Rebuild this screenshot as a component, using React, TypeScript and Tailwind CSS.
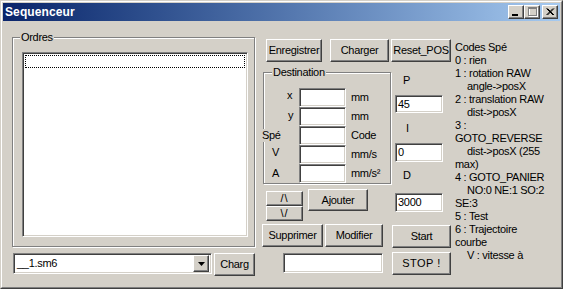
import React from 'react';

/* ── Win2000 bevels ───────────────────────────────────── */
const raised =
  'bg-[#d4d0c8] border border-t-white border-l-white border-r-[#404040] border-b-[#404040] shadow-[inset_-1px_-1px_0_#808080]';
const sunken =
  'bg-white border border-t-[#808080] border-l-[#808080] border-r-white border-b-white shadow-[inset_1px_1px_0_#404040,inset_-1px_-1px_0_#d4d0c8]';
const etched = 'border border-[#808080] shadow-[inset_1px_1px_0_#fff,1px_1px_0_#fff]';

function Btn({ className, children }: { className: string; children: React.ReactNode }) {
  return (
    <div className={`${raised} ${className} flex shrink-0 items-center justify-center text-black`}>
      {children}
    </div>
  );
}

function Edit({ className, value = '' }: { className: string; value?: string }) {
  return (
    <div className={`${sunken} ${className} shrink-0 pl-[2px] pt-[2px] text-black`}>{value}</div>
  );
}

/* ── Title bar ────────────────────────────────────────── */
function CaptionButton({ children }: { children: React.ReactNode }) {
  return (
    <div className={`${raised} h-[14px] w-[16px]`}>
      <svg width="14" height="12" viewBox="0 0 14 12">
        {children}
      </svg>
    </div>
  );
}

function TitleBar() {
  return (
    <div className="flex h-[18px] shrink-0 items-center bg-gradient-to-r from-[#0a246a] to-[#a6caf0] pl-[2px] pr-[2px]">
      <span className="text-[12px] font-bold tracking-[0.1px] text-white">Sequenceur</span>
      <div className="ml-auto flex items-center">
        <CaptionButton>
          <rect x="3" y="8" width="6" height="2" fill="#000" />
        </CaptionButton>
        <CaptionButton>
          <rect x="3.5" y="1.5" width="8" height="8" fill="none" stroke="#fff" transform="translate(1 1)" />
          <rect x="3.5" y="1.5" width="8" height="8" fill="none" stroke="#808080" />
          <rect x="3" y="2" width="9" height="1" fill="#808080" />
        </CaptionButton>
        <div className="ml-[2px]">
          <CaptionButton>
            <path d="M3.5 2.5 L10 9 M4.5 2.5 L11 9 M10 2.5 L3.5 9 M11 2.5 L4.5 9" stroke="#000" strokeWidth="1" />
          </CaptionButton>
        </div>
      </div>
    </div>
  );
}

/* ── Data ─────────────────────────────────────────────── */
const destRows = [
  { label: 'x', pad: 'w-[35px] pl-[23px] -mt-[4px]', unit: 'mm' },
  { label: 'y', pad: 'w-[35px] pl-[24px] -mt-[3px]', unit: 'mm' },
  { label: 'Spé', pad: 'w-[37px] -ml-[2px] bg-[#d4d0c8]', unit: 'Code' },
  { label: 'V', pad: 'w-[35px] pl-[8px] -mt-[4px]', unit: 'mm/s' },
  { label: 'A', pad: 'w-[35px] pl-[8px]', unit: 'mm/s²' },
];

const codes: [string, boolean][] = [
  ['Codes Spé', false],
  ['0 : rien', false],
  ['1 : rotation RAW', false],
  ['angle->posX', true],
  ['2 : translation RAW', false],
  ['dist->posX', true],
  ['3 :', false],
  ['GOTO_REVERSE', false],
  ['dist->posX (255', true],
  ['max)', false],
  ['4 : GOTO_PANIER', false],
  ['NO:0 NE:1 SO:2', true],
  ['SE:3', false],
  ['5 : Test', false],
  ['6 : Trajectoire', false],
  ['courbe', false],
  ['V : vitesse à', true],
];

/* ── Page ─────────────────────────────────────────────── */
export default function App() {
  return (
    <div className="h-[289px] w-[563px] border border-t-[#d4d0c8] border-l-[#d4d0c8] border-r-[#404040] border-b-[#404040] bg-[#d4d0c8] font-['Liberation_Sans',Arial,sans-serif] text-[11px] leading-[13px] tracking-[-0.3px] text-black">
      <div className="flex h-full flex-col border border-t-white border-l-white border-r-[#808080] border-b-[#808080] p-px">
        <TitleBar />

        <div className="flex flex-1 items-start">
          {/* ── Left: Ordres + file ── */}
          <div className="ml-[9px] flex w-[243px] shrink-0 flex-col">
            <div className={`${etched} relative mt-[16px] h-[210px] w-[243px]`}>
              <span className="absolute -top-[7px] left-[7px] bg-[#d4d0c8] px-px">Ordres</span>
              <div className={`${sunken} ml-[9px] mt-[14px] h-[185px] w-[226px] p-[2px]`}>
                <div className="h-[13px] w-full border border-dotted border-black" />
              </div>
            </div>
            <div className="mt-[6px] flex items-start">
              <div className={`${sunken} ml-px flex h-[21px] w-[205px] items-center p-[2px]`}>
                <span className="flex-1 pl-px">__1.sm6</span>
                <div className={`${raised} flex h-[17px] w-[16px] items-center justify-center`}>
                  <svg width="7" height="4" viewBox="0 0 7 4">
                    <path d="M0 0 H7 L3.5 4 Z" fill="#000" />
                  </svg>
                </div>
              </div>
              <Btn className="ml-[2px] h-[23px] w-[41px]">Charg</Btn>
            </div>
          </div>

          {/* ── Middle: controls ── */}
          <div className="ml-[7px] mt-[18px] flex w-[189px] shrink-0 flex-col">
            <div className="flex items-start">
              <Btn className="ml-[4px] h-[23px] w-[56px]">Enregistrer</Btn>
              <Btn className="ml-[8px] h-[23px] w-[59px]">Charger</Btn>
              <Btn className="ml-[2px] h-[23px] w-[60px]">Reset_POS</Btn>
            </div>

            <div className="flex items-start">
              <div className="flex w-[130px] flex-col">
                <div className={`${etched} relative ml-px mt-[10px] h-[112px] w-[128px] pt-[15px]`}>
                  <span className="absolute -top-[7px] left-[8px] bg-[#d4d0c8] px-px">Destination</span>
                  {destRows.map(r => (
                    <div key={r.label} className="flex h-[19px] items-center">
                      <span className={`shrink-0 ${r.pad}`}>{r.label}</span>
                      <Edit className="h-[19px] w-[47px]" />
                      <span className="ml-[5px]">{r.unit}</span>
                    </div>
                  ))}
                </div>
                <div className="mt-[5px] flex items-start">
                  <div className="ml-[4px] mt-[2px] flex flex-col">
                    <Btn className="h-[15px] w-[37px] tracking-[1px]">/\</Btn>
                    <Btn className="h-[15px] w-[37px] tracking-[1px]">\/</Btn>
                  </div>
                  <Btn className="ml-[5px] h-[22px] w-[60px]">Ajouter</Btn>
                </div>
              </div>

              <div className="flex w-[59px] flex-col">
                <span className="ml-[11px] mt-[12px]">P</span>
                <Edit className="ml-[3px] mt-[8px] h-[18px] w-[48px]" value="45" />
                <span className="ml-[14px] mt-[9px]">I</span>
                <Edit className="ml-[3px] mt-[8px] h-[19px] w-[48px]" value="0" />
                <span className="ml-[11px] mt-[7px]">D</span>
                <Edit className="ml-[3px] mt-[11px] h-[19px] w-[48px]" value="3000" />
              </div>
            </div>

            <div className="mt-[3px] flex items-start">
              <Btn className="h-[23px] w-[61px]">Supprimer</Btn>
              <Btn className="ml-[2px] h-[23px] w-[58px]">Modifier</Btn>
              <Btn className="ml-[9px] mt-px h-[23px] w-[59px]">Start</Btn>
            </div>

            <div className="mt-[4px] flex items-start">
              <Edit className="ml-[21px] mt-px h-[20px] w-[100px]" />
              <Btn className="ml-[9px] h-[23px] w-[59px] tracking-[0.5px]">STOP !</Btn>
            </div>
          </div>

          {/* ── Right: codes help ── */}
          <div className="ml-[4px] mt-[20px] flex w-[104px] flex-col">
            {codes.map(([line, indent], i) => (
              <div key={i} className={`h-[13px] whitespace-nowrap ${indent ? 'pl-[12px]' : ''}`}>
                {line}
              </div>
            ))}
          </div>
        </div>
      </div>
    </div>
  );
}
